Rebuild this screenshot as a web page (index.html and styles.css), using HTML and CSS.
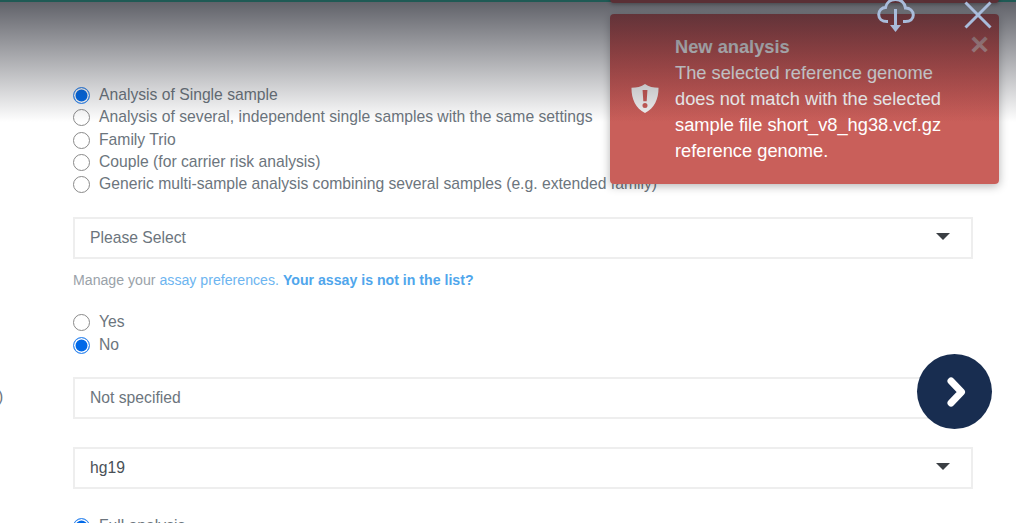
FILE: index.html
```html
<!DOCTYPE html>
<html lang="en">
<head>
    <meta charset="UTF-8">
    <title>New analysis</title>
    <link rel="stylesheet" href="styles.css">
</head>
<body>
    <div class="top-line"></div>

    <!-- form -->
    <div class="form">
        <div class="radio-group first">
            <label class="radio"><input type="radio" name="kind" checked>Analysis of Single sample</label>
            <label class="radio"><input type="radio" name="kind">Analysis of several, independent single samples with the same settings</label>
            <label class="radio"><input type="radio" name="kind">Family Trio</label>
            <label class="radio"><input type="radio" name="kind">Couple (for carrier risk analysis)</label>
            <label class="radio"><input type="radio" name="kind">Generic multi-sample analysis combining several samples (e.g. extended family)</label>
        </div>

        <div class="select muted">Please Select<span class="caret"></span></div>
        <p class="hint">Manage your <a href="#">assay preferences.</a> <a href="#" class="bold">Your assay is not in the list?</a></p>

        <div class="radio-group second">
            <label class="radio"><input type="radio" name="yesno">Yes</label>
            <label class="radio"><input type="radio" name="yesno" checked>No</label>
        </div>

        <div class="select muted third">Not specified<span class="caret"></span></div>
        <div class="select fourth">hg19<span class="caret"></span></div>

        <div class="radio-group fifth">
            <label class="radio"><input type="radio" name="scope" checked>Full analysis</label>
        </div>
    </div>

    <span class="cut-label">)</span>

    <!-- next button -->
    <button class="next-btn" aria-label="Next">
        <svg width="20" height="30" viewBox="0 0 20 30"><path d="M4 4 L14.500 15 L4 26" fill="none" stroke="#fff" stroke-width="7" stroke-linecap="round" stroke-linejoin="round"/></svg>
    </button>

    <!-- toasts -->
    <div class="toast-prev"></div>
    <div class="toast">
        <svg class="toast-icon" width="28" height="31" viewBox="0 0 30 32">
            <path fill-rule="evenodd" fill="#f4f4f4" d="M15 0.5 C19 3.5 24 4.500 29.500 4.500 C29.500 17 25 26.500 15 31.500 C5 26.500 0.500 17 0.500 4.500 C6 4.500 11 3.500 15 0.500 Z M12.400 7 L13.200 19 L16.800 19 L17.600 7 Z M15 20.800 A2.700 2.700 0 1 0 15 26.200 A2.700 2.700 0 1 0 15 20.800 Z"/>
        </svg>
        <div class="toast-text">
            <strong>New analysis</strong>
            The selected reference genome does not match with the selected sample file short_v8_hg38.vcf.gz reference genome.
        </div>
        <span class="toast-close">×</span>
    </div>

    <!-- header shade -->
    <div class="shade"></div>

    <svg class="cloud-icon" width="38" height="34" viewBox="0 0 38 34">
        <path d="M11 22.500 H10 C5 22.500 1.700 19.500 1.700 15.500 C1.700 11.500 5 8.500 8.500 8.500 C9.500 3.500 13.500 0.500 18.500 0.500 C24 0.500 28 4 28.500 9 C33 9 36.300 12 36.300 16 C36.300 20 33 22.500 28.500 22.500 H26" fill="none" stroke="#a9bcdb" stroke-width="3"/>
        <path d="M18.500 10 V28" fill="none" stroke="#a9bcdb" stroke-width="3"/>
        <path d="M13 26 H24 L18.500 33 Z" fill="#a9bcdb"/>
    </svg>
    <svg class="close-icon" width="28" height="28" viewBox="0 0 28 28">
        <path d="M1.500 1.500 L26.500 26.500 M26.500 1.500 L1.500 26.500" fill="none" stroke="#a9bcdb" stroke-width="3"/>
    </svg>
</body>
</html>
```

FILE: styles.css
```css
* {
    box-sizing: border-box;
}

html, body {
    margin: 0;
    height: 523px;
    overflow: hidden;
}

body {
    background: #fff;
    position: relative;
    font-family: "Liberation Sans", Arial, sans-serif;
    font-size: 15.7px;
    color: #6c757d;
}

.top-line {
    position: absolute;
    left: 0;
    top: 0;
    width: 100%;
    height: 2px;
    background: #1f5a55;
    z-index: 4;
}

/* form */
.form {
    padding: 83.6px 43px 0 73px;
}

.radio-group {
    display: flex;
    flex-direction: column;
}

.radio {
    display: flex;
    align-items: center;
    height: 22.4px;
    white-space: nowrap;
}

.radio input {
    appearance: none;
    width: 17px;
    height: 17px;
    margin: 1px 9px 0 0;
    border: 1.7px solid #8a8a8a;
    border-radius: 50%;
    background: #fff;
}

.radio input:checked {
    border-color: #3f8ff0;
    background: #0069e8;
    box-shadow: inset 0 0 0 1.5px #fff;
}

.select {
    position: relative;
    height: 42px;
    margin-top: 21px;
    padding: 0 15px;
    border: 2px solid #eeeeee;
    line-height: 38px;
    color: #495057;
}

.select.muted {
    color: #6c757d;
}

.caret {
    position: absolute;
    right: 21px;
    top: 14px;
    border-left: 7px solid transparent;
    border-right: 7px solid transparent;
    border-top: 7px solid #3b3f44;
}

.hint {
    margin: 13px 0 0;
    font-size: 14.15px;
    line-height: 17px;
    color: #9aa2a9;
}

.hint a {
    color: #6db5f0;
    text-decoration: none;
}

.hint a.bold {
    font-weight: bold;
    color: #50a6ec;
}

.second {
    margin-top: 22.6px;
}

.third {
    margin-top: 21px;
}

.fourth {
    margin-top: 28px;
}

.fifth {
    margin-top: 26px;
}

.cut-label {
    position: absolute;
    left: -2px;
    top: 388px;
}

/* next button */
.next-btn {
    position: absolute;
    left: 917.3px;
    top: 354px;
    width: 75px;
    height: 75px;
    padding: 0 0 0 4px;
    border: none;
    border-radius: 50%;
    background: #182d50;
    display: flex;
    align-items: center;
    justify-content: center;
}

/* toast */
.toast-prev {
    position: absolute;
    left: 610px;
    top: -40px;
    width: 389px;
    height: 43px;
    border-radius: 4px;
    background: #5a2f35;
    box-shadow: 0 1px 4px rgba(0, 0, 0, 0.3);
    z-index: 5;
}

.toast {
    position: absolute;
    left: 610px;
    top: 14px;
    width: 389px;
    height: 170px;
    padding: 20px 40px 0 65px;
    border-radius: 4px;
    background: linear-gradient(to bottom, #d44643, #c95f5a 64%);
    box-shadow: 0 2px 10px rgba(0, 0, 0, 0.3);
    color: #fff;
    font-size: 18.28px;
    line-height: 26px;
    z-index: 2;
}

.toast-text strong {
    display: block;
}

.toast-icon {
    position: absolute;
    left: 21px;
    top: 69px;
}

.toast-close {
    position: absolute;
    right: 10px;
    top: 15px;
    font-size: 32px;
    line-height: 30px;
    font-weight: bold;
    color: #fff;
    opacity: 0.55;
}

/* shade over the top of the page */
.shade {
    position: absolute;
    left: 0;
    top: 0;
    width: 100%;
    height: 122px;
    background: linear-gradient(to bottom, rgba(40, 42, 52, 0.75), rgba(40, 42, 52, 0));
    pointer-events: none;
    z-index: 3;
}

.cloud-icon {
    position: absolute;
    left: 877px;
    top: -1px;
    z-index: 6;
}

.close-icon {
    position: absolute;
    left: 964px;
    top: 1px;
    z-index: 6;
}
```
